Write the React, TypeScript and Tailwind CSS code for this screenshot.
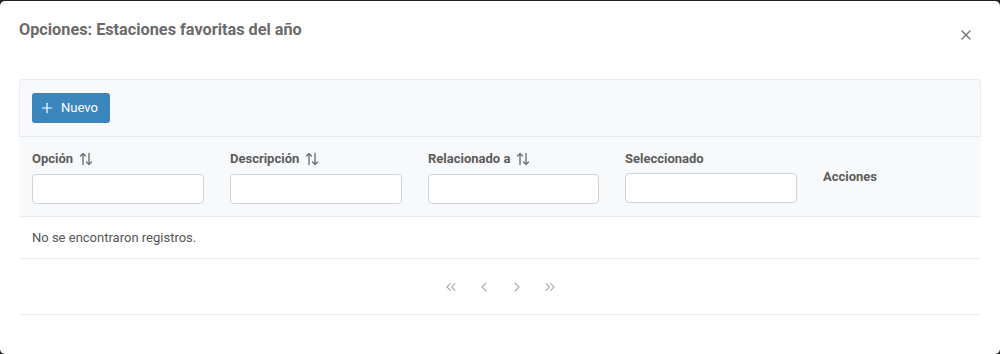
import { Plus, X, ChevronLeft, ChevronRight, ChevronsLeft, ChevronsRight } from 'lucide-react'

const columns = [
  { label: 'Opción', sortable: true },
  { label: 'Descripción', sortable: true },
  { label: 'Relacionado a', sortable: true },
  { label: 'Seleccionado', sortable: false },
]

function SortIcon() {
  return (
    <svg width="14" height="14" viewBox="0 0 14 14" fill="none" stroke="currentColor" strokeWidth="1.4" strokeLinecap="round" strokeLinejoin="round" className="ml-1.5 text-[#6b7280]">
      <path d="M4 12.5V1.5M1.5 4L4 1.5L6.5 4" />
      <path d="M10 1.5V12.5M7.5 10L10 12.5L12.5 10" />
    </svg>
  )
}

export default function App() {
  return (
    <div className="w-[1000px] h-[354px] bg-[#222] pt-[1px] font-['Roboto',sans-serif]">
      <div className="h-[353px] bg-white rounded-[5px] flex flex-col">
        {/* header */}
        <div className="flex items-start justify-between pl-[19px] pr-[26px] pt-[18px] h-[78px]">
          <h1 className="text-[16.25px] font-bold text-[#6b6b6b] leading-[22px]">Opciones: Estaciones favoritas del año</h1>
          <button className="mt-[8px] text-[#777]">
            <X className="w-[16px] h-[16px]" strokeWidth={2} />
          </button>
        </div>

        {/* table */}
        <div className="mx-[19px] text-[13px] text-[#555]">
          <div className="bg-[#f8f9fa] border border-[#e6ecf2] rounded-t-[3px] h-[58px] flex items-center px-[12px]">
            <button className="flex items-center gap-[6px] h-[30px] w-[78px] px-[7px] bg-[#3b85bd] text-white rounded-[3px] text-[13px]">
              <Plus className="w-[16px] h-[16px]" strokeWidth={1.8} />
              Nuevo
            </button>
          </div>

          <div className="grid grid-cols-[198px_198px_197px_198px_1fr] bg-[#f8f9fa] border-b border-[#e3ebf3] h-[80px]">
            {columns.map(c => (
              <div key={c.label} className="px-[13px] pt-[13px]">
                <div className="flex items-center h-[18px] font-bold text-[#5c5c5c]">
                  {c.label}
                  {c.sortable && <SortIcon />}
                </div>
                <input className={`h-[30px] w-full bg-white border border-[#ced4da] rounded-[4px] ${c.sortable ? 'mt-[6px]' : 'mt-[5px]'}`} />
              </div>
            ))}
            <div className="px-[13px] flex items-center font-bold text-[#5c5c5c]">Acciones</div>
          </div>

          <div className="h-[42px] flex items-center px-[13px] border-b border-[#e9ecef] text-[#555]">
            No se encontraron registros.
          </div>

          <div className="h-[56px] flex items-center justify-center gap-[1px] border-b border-[#e9ecef] text-[#aaa]">
            <span className="w-[32px] flex justify-center"><ChevronsLeft className="w-[16px] h-[16px]" strokeWidth={1.6} /></span>
            <span className="w-[32px] flex justify-center"><ChevronLeft className="w-[16px] h-[16px]" strokeWidth={1.6} /></span>
            <span className="w-[32px] flex justify-center"><ChevronRight className="w-[16px] h-[16px]" strokeWidth={1.6} /></span>
            <span className="w-[32px] flex justify-center"><ChevronsRight className="w-[16px] h-[16px]" strokeWidth={1.6} /></span>
          </div>
        </div>
      </div>
    </div>
  )
}
